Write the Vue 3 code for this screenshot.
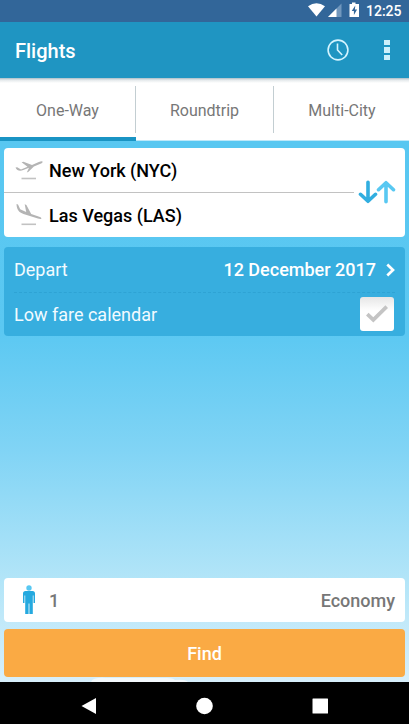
<script setup>
const tabs = ['One-Way', 'Roundtrip', 'Multi-City']
</script>

<template>
  <div class="screen">
    <div class="status">
      <svg class="status-icons" width="54" height="22" viewBox="0 0 54 22">
        <path d="M0 6.3Q8.500 0 17 6.300L8.500 16.500Z" fill="#fff" />
        <path d="M20 17L33.500 3.500V17Z" fill="#7197bd" />
        <path d="M20 17L28.500 8.500V17Z" fill="#fff" />
        <path d="M44 2.500h3.500v1.500h3.500v13h-9.500v-13h2.500z" fill="#fff" />
        <path d="M47.300 5.500l-3.600 5.500h2.200v4l3.200-5.500h-2.200z" fill="#326699" />
      </svg>
      <span class="time">12:25</span>
    </div>

    <header class="bar">
      <h1>Flights</h1>
      <svg class="clock" width="22" height="22" viewBox="0 0 22 22" fill="none" stroke="#d4f4ff" stroke-width="1.600">
        <circle cx="11" cy="11" r="9.900" />
        <path d="M10.500 4.500V11l4.700 5" />
      </svg>
      <div class="dots"><i></i><i></i><i></i></div>
    </header>

    <nav class="tabs">
      <div v-for="(t, i) in tabs" :key="t" class="tab" :class="{ active: i === 0 }">
        <span>{{ t }}</span>
      </div>
    </nav>

    <main class="content">
      <section class="route">
        <div class="cities">
          <div class="city">
            <svg width="28" height="24" viewBox="0 0 28 24">
              <path d="M.6 9.500L2.200 9.200 6 11.500l6.500-2.700L6.600 4.200l1.800-.5 8.600 3.400 6.800-3c2.200-.9 3.900-1 3.900-.2 0 .8-1.700 1.600-3.400 2.300l-5.400 2.300-5.400 5.300-1.700.6 2.200-4.700-5.700 2.300c-3 1.200-6.500.8-7.700-2.200z" fill="#b4b4b4" />
              <path d="M6.500 20.500H21" stroke="#c2c2c2" stroke-width="1.600" />
            </svg>
            <span>New York (NYC)</span>
          </div>
          <div class="city">
            <svg width="28" height="24" viewBox="0 0 28 24">
              <path d="M1.500 1l1.500.5 2.200 4.700 6 2.900L9.700 1.300l1.700.6 4.800 9 7.300 2.500c2.200.8 3.300 1.400 2.900 2.200-.4.800-2 .5-3.500 0L8.500 11C4 9.300 1.700 7 1.500 1z" fill="#b4b4b4" />
              <path d="M6.500 21.300H21" stroke="#c2c2c2" stroke-width="1.600" />
            </svg>
            <span>Las Vegas (LAS)</span>
          </div>
        </div>
        <svg class="swap" width="38" height="24" viewBox="0 0 38 24" fill="none" stroke-width="3.600" stroke-linecap="round" stroke-linejoin="round">
          <path d="M10 2.300V21M2.500 14.300L10 21.300l7.500-7" stroke="#31aee0" />
          <path d="M28 21.700V3M20.500 9.700L28 2.700l7.500 7" stroke="#58c8f2" />
        </svg>
      </section>

      <section class="dates">
        <div class="row">
          <span>Depart</span>
          <strong>12 December 2017</strong>
          <svg class="chev" width="9" height="14" viewBox="0 0 9 14" fill="none" stroke="#fff" stroke-width="2.700">
            <path d="M1.300 1.500L7 7l-5.700 5.500" />
          </svg>
        </div>
        <div class="row">
          <span>Low fare calendar</span>
          <div class="check">
            <svg width="22" height="18" viewBox="0 0 22 18" fill="none" stroke="#c4c4c4" stroke-width="3.700">
              <path d="M1.300 9.200l6 5.700L20.700 1.600" />
            </svg>
          </div>
        </div>
      </section>

      <section class="pax">
        <svg width="12" height="30" viewBox="0 0 12 30">
          <circle cx="6" cy="3" r="2.700" fill="#58c8f2" />
          <path d="M2.500 6h7Q12 6 12 8.500v9.500h-1.500V10.500H9.800V29H6.400V18.500h-.8V29H2.200V10.500H1.500V18H0V8.500Q0 6 2.500 6z" fill="#25a9df" />
        </svg>
        <span class="count">1</span>
        <span class="cabin">Economy</span>
      </section>

      <button class="find">Find</button>
      <svg class="cloud" width="100" height="5" viewBox="0 0 100 5">
        <path d="M0 5Q2 0 15 1H76Q82 1 84 3Q94 2 97 5Z" fill="#f3f9fc" />
      </svg>
    </main>

    <footer class="keys">
      <svg width="409" height="42" viewBox="0 0 409 42" fill="#fff">
        <path d="M81.500 24L96 16v16z" />
        <circle cx="204.500" cy="24" r="8.300" />
        <rect x="312.500" y="16.500" width="15.500" height="15" rx=".5" />
      </svg>
    </footer>
  </div>
</template>

<style>
body {
  margin: 0;
}
</style>

<style scoped>
* {
  box-sizing: border-box;
}
.screen {
  width: 409px;
  height: 724px;
  display: flex;
  flex-direction: column;
  overflow: hidden;
  font-family: Roboto, "Liberation Sans", sans-serif;
}
.status {
  height: 22px;
  flex: none;
  background: #326699;
  display: flex;
  justify-content: flex-end;
  align-items: center;
  padding-right: 7px;
  color: #fff;
}
.status-icons {
  margin-right: 4px;
}
.time {
  width: 36px;
  font-size: 14px;
  font-weight: 500;
  white-space: nowrap;
}
.bar {
  height: 56px;
  flex: none;
  background: #1f95c2;
  display: flex;
  align-items: center;
  padding: 0 19px 0 15px;
}
h1 {
  flex: 1;
  margin: 0;
  padding-top: 2px;
  font-size: 20px;
  font-weight: 500;
  color: #fff;
}
.clock {
  margin-right: 35px;
}
.dots {
  display: flex;
  flex-direction: column;
  gap: 2px;
}
.dots i {
  width: 6px;
  height: 5.500px;
  background: #cdf0fb;
}
.tabs {
  height: 63px;
  flex: none;
  display: grid;
  grid-template-columns: 136px 138px 135px;
  background: linear-gradient(#a8bdc7 0, #e4e9eb 2px, #fff 5px, #fff 62px, #bce8f9 62px);
}
.tab {
  display: flex;
  align-items: center;
  padding: 8px 0 7px;
  border-bottom: 1px solid transparent;
}
.tab span {
  flex: 1;
  height: 47px;
  display: flex;
  align-items: center;
  justify-content: center;
  padding-top: 2px;
  color: #777;
  font-size: 16px;
}
.tab:last-child span {
  padding-left: 1px;
}
.tab:not(:last-child) span {
  border-right: 1px solid #c3ced2;
}
.tab.active {
  border-bottom: 4px solid #1994c4;
  padding-bottom: 4px;
}
.content {
  position: relative;
  flex: 1;
  display: flex;
  flex-direction: column;
  padding: 7px 4px 5px;
  background: linear-gradient(#58c7f1 0, #5bc8f2 190px, #81d4f5 310px, #b3e5f8 440px, #d7effb 541px);
}
.route {
  height: 89px;
  background: #fff;
  border-radius: 4px;
  display: flex;
  align-items: center;
}
.cities {
  width: 350px;
}
.city {
  height: 44px;
  display: flex;
  align-items: center;
  padding-left: 11px;
  gap: 6px;
  font-size: 18px;
  font-weight: 500;
  color: #000;
}
.city + .city {
  height: 45px;
  border-top: 1px solid #c2c2c2;
}
.swap {
  margin: 0 0 2px 4px;
}
.dates {
  margin-top: 10px;
  height: 89px;
  border-radius: 4px;
  background: #37aedf;
  color: #f2fbff;
  font-size: 18px;
}
.row {
  height: 45px;
  margin: 0 10px;
  display: flex;
  align-items: center;
}
.row + .row {
  height: 44px;
  border-top: 1px dashed #2ea3d4;
}
.row span {
  flex: 1;
}
.row strong {
  font-weight: 500;
  color: #fff;
}
.chev {
  margin-left: 10px;
}
.check {
  width: 34px;
  height: 34px;
  margin: 0 1px 1px 0;
  border-radius: 3px;
  background: linear-gradient(#e6e6e6, #fff 14px);
  display: flex;
  align-items: center;
  justify-content: center;
}
.pax {
  margin-top: auto;
  height: 44px;
  background: #fff;
  border-radius: 4px;
  display: flex;
  align-items: center;
  padding: 0 10px 0 19px;
  color: #777;
  font-size: 18px;
  font-weight: 500;
}
.count {
  flex: 1;
  margin-left: 14px;
}
.cabin {
  padding-top: 1px;
}
.find {
  margin: 7px 0 0;
  height: 48px;
  border: 0;
  border-radius: 4px;
  background: #faaa44;
  color: #fff;
  font: 500 18px Roboto, "Liberation Sans", sans-serif;
  padding: 0;
}
.cloud {
  position: absolute;
  left: 91px;
  bottom: 0;
}
.keys {
  height: 42px;
  flex: none;
  background: #000;
}
.keys svg {
  display: block;
}
</style>
